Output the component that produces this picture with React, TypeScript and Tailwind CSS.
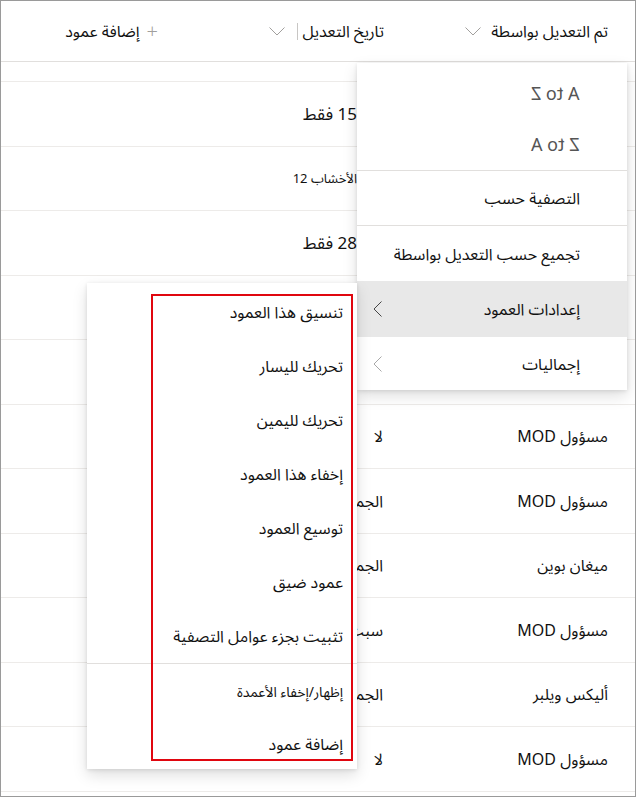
import React from 'react';

const font = "font-['Noto_Sans','Noto_Sans_Arabic','DejaVu_Sans',sans-serif]";

function ChevronDown() {
  return (
    <svg width="16" height="9" viewBox="0 0 16 9" fill="none" className="text-[#a19f9d]">
      <path d="M0.5 0.5L8 8L15.5 0.5" stroke="currentColor" strokeWidth="1" />
    </svg>
  );
}

function ChevronLeft({ light = false }: { light?: boolean }) {
  return (
    <svg width="9" height="16" viewBox="0 0 9 16" fill="none" className={light ? 'text-[#a8a8a8]' : 'text-[#444]'}>
      <path d="M8.5 0.5L1 8L8.5 15.5" stroke="currentColor" strokeWidth="1" />
    </svg>
  );
}

const rows: { name: string; val: string; top?: boolean; small?: boolean }[] = [
  { name: '', val: '15 فقط', top: true },
  { name: '', val: 'الأخشاب 12', top: true, small: true },
  { name: '', val: '28 فقط', top: true },
  { name: '', val: '' },
  { name: '', val: '' },
  { name: 'مسؤول MOD', val: 'لا' },
  { name: 'مسؤول MOD', val: 'الجمع' },
  { name: 'ميغان بوين', val: 'الجمع' },
  { name: 'مسؤول MOD', val: 'سبت' },
  { name: 'أليكس ويلبر', val: 'الجمع' },
  { name: 'مسؤول MOD', val: 'لا' },
];

const subItems = [
  'تنسيق هذا العمود',
  'تحريك لليسار',
  'تحريك لليمين',
  'إخفاء هذا العمود',
  'توسيع العمود',
  'عمود ضيق',
  'تثبيت بجزء عوامل التصفية',
];

export default function App() {
  return (
    <div dir="rtl" className={`${font} relative w-[636px] h-[797px] overflow-hidden bg-white border border-[#9a9a9a] text-[#111]`}>
      {/* Header */}
      <div className="flex h-[61px] items-center border-b border-[#e1dfdd] text-[16px]">
        <div className="flex w-[227px] items-center gap-[10px] pr-[27px]">
          <span className="whitespace-nowrap">تم التعديل بواسطة</span>
          <ChevronDown />
        </div>
        <div className="flex w-[228px] items-center pr-[24px]">
          <span className="whitespace-nowrap">تاريخ التعديل</span>
          <span className="mr-[5px] ml-[12px] h-[17px] w-px bg-[#c8c6c4]" />
          <ChevronDown />
        </div>
        <div className="flex items-center gap-[7px] pr-[22px]">
          <span className="text-[20px] font-light leading-none text-[#a19f9d]">+</span>
          <span>إضافة عمود</span>
        </div>
      </div>
      <div className="h-[20px] border-b border-[#edebe9]" />

      {/* Rows */}
      {rows.map((r, i) => (
        <div key={i} className="flex h-[64.5px] items-center border-b border-[#edebe9] text-[16px]">
          <div className="w-[227px] whitespace-nowrap pr-[27px]">{r.name}</div>
          <div
            className={`w-[228px] whitespace-nowrap ${r.top ? 'pr-[51px]' : 'pr-[25px]'} ${
              r.small ? 'text-[13px]' : r.top ? 'text-[17px]' : ''
            }`}
          >
            {r.val}
          </div>
        </div>
      ))}

      {/* Column header menu */}
      <div className="absolute right-[8px] top-[62px] flex w-[270px] flex-col bg-white text-[16px] shadow-[0_6px_14px_rgba(0,0,0,0.13),0_1px_4px_rgba(0,0,0,0.11)]">
        <div className="pt-[5px]">
          <div className="flex h-[51px] items-center pr-[47px] text-[18px] text-[#555]">
            <span className="inline-block -scale-x-100" dir="ltr">A to Z</span>
          </div>
          <div className="flex h-[51px] items-center pr-[47px] text-[18px] text-[#555]">
            <span className="inline-block -scale-x-100" dir="ltr">Z to A</span>
          </div>
        </div>
        <div className="h-px bg-[#e1dfdd]" />
        <div className="flex h-[54px] items-center pr-[47px]">التصفية حسب</div>
        <div className="h-px bg-[#e1dfdd]" />
        <div className="flex h-[55px] items-center pr-[47px]">تجميع حسب التعديل بواسطة</div>
        <div className="flex h-[56px] items-center justify-between bg-[#e8e8e8] pr-[47px] pl-[16px]">
          <span>إعدادات العمود</span>
          <ChevronLeft />
        </div>
        <div className="flex h-[53px] items-center justify-between pr-[47px] pl-[16px]">
          <span>إجماليات</span>
          <ChevronLeft light />
        </div>
      </div>

      {/* Column settings submenu */}
      <div className="absolute right-[278px] top-[282px] flex w-[270px] flex-col bg-white text-[16px] shadow-[0_6px_14px_rgba(0,0,0,0.13),0_1px_4px_rgba(0,0,0,0.11)]">
        <div className="pt-[2px]">
          {subItems.map((t) => (
            <div key={t} className="flex h-[54px] items-center whitespace-nowrap pr-[14px]">
              {t}
            </div>
          ))}
        </div>
        <div className="h-px bg-[#e1dfdd]" />
        <div className="flex h-[54px] items-center pr-[14px] text-[14px]">إظهار/إخفاء الأعمدة</div>
        <div className="flex h-[51px] items-center pr-[14px]">إضافة عمود</div>

        {/* highlight annotation */}
        <div className="pointer-events-none absolute left-[64px] right-[4px] top-[11px] bottom-[8px] border-2 border-[#e0060f]" />
      </div>
    </div>
  );
}
